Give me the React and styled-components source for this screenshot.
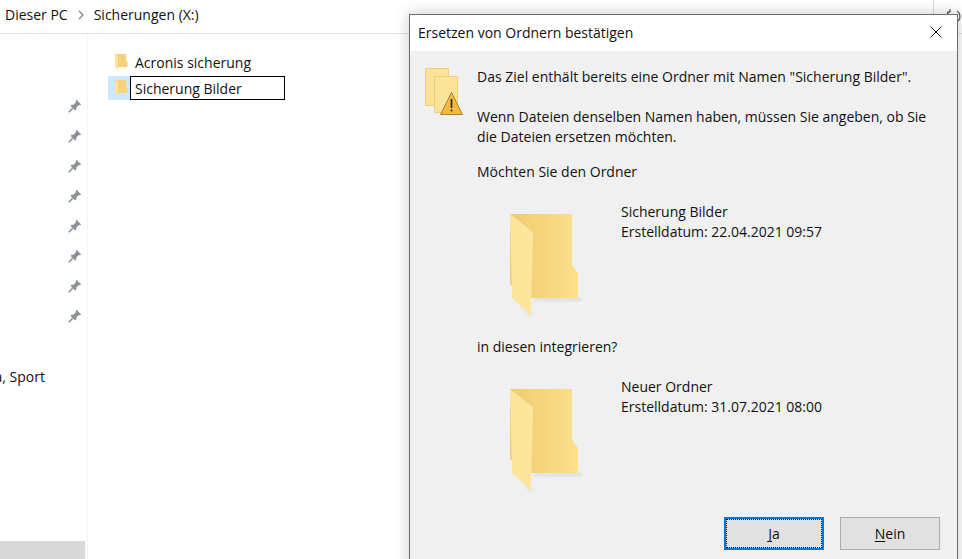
import React from 'react';
import styled, { createGlobalStyle } from 'styled-components';

const Global = createGlobalStyle`
  html, body { margin: 0; padding: 0; background: #fff; overflow: hidden; }
  body { font-family: "Open Sans", "Liberation Sans", sans-serif; color: #111; }
`;

const Screen = styled.div`
  position: relative;
  width: 962px;
  height: 559px;
  overflow: hidden;
  background: #fff;
  display: flex;
  flex-direction: column;
  font-size: 14px;
`;

const AddressBar = styled.div`
  flex: 0 0 34px;
  box-sizing: border-box;
  border-bottom: 1px solid #e3e3e3;
  display: flex;
  align-items: center;
  padding: 0 0 4px 5px;
  gap: 9px;
`;

const Chevron = styled.span`
  display: flex;
  color: #7a7a7a;
`;

const Tools = styled.div`
  margin-left: auto;
  display: flex;
  align-items: center;
  height: 33px;
  margin-bottom: -4px;
`;

const ToolSep = styled.div`
  width: 1px;
  height: 33px;
  background: #d9d9d9;
  margin: 0 10px 0 17px;
`;

const Main = styled.div`
  flex: 1;
  display: flex;
  min-height: 0;
`;

const Sidebar = styled.div`
  flex: 0 0 88px;
  box-sizing: border-box;
  border-right: 1px solid #f5f5f5;
  display: flex;
  flex-direction: column;
  padding-top: 57px;
  position: relative;
`;

const PinRow = styled.div`
  height: 30px;
  display: flex;
  align-items: center;
  justify-content: flex-end;
  padding-right: 5px;
`;

const SportRow = styled.div`
  margin-top: 35px;
  width: 45px;
  height: 20px;
  display: flex;
  justify-content: flex-end;
  align-items: center;
  overflow: hidden;
  white-space: nowrap;
`;

const ScrollThumb = styled.div`
  position: absolute;
  left: 0;
  bottom: 0;
  width: 85px;
  height: 18px;
  background: #d9d9d9;
`;

const FileList = styled.div`
  padding: 15px 0 0 20px;
  display: flex;
  flex-direction: column;
`;

const FileRow = styled.div`
  height: 26px;
  display: flex;
  align-items: center;
`;

const IconCell = styled.div`
  box-sizing: border-box;
  width: 22px;
  height: 24px;
  padding-left: 7px;
  display: flex;
  align-items: center;
  background: ${(p) => (p.$selected ? '#cce8ff' : 'transparent')};
`;

const FileName = styled.span`
  padding-left: 5px;
`;

const RenameBox = styled.div`
  box-sizing: border-box;
  width: 155px;
  height: 24px;
  border: 1px solid #000;
  padding-left: 4px;
  display: flex;
  align-items: center;
`;

const Dialog = styled.div`
  position: absolute;
  left: 409px;
  top: 14px;
  width: 549px;
  height: 560px;
  box-sizing: border-box;
  border: 1px solid #6e6e6e;
  background: #f0f0f0;
  box-shadow: 0 0 14px rgba(0, 0, 0, 0.22);
`;

const TitleBar = styled.div`
  box-sizing: border-box;
  height: 36px;
  background: #fff;
  display: flex;
  align-items: center;
  justify-content: space-between;
  padding: 0 15px 2px 8px;
`;

const Body = styled.div`
  display: flex;
  padding: 16px 0 0 14px;
`;

const WarnIcon = styled.div`
  flex: 0 0 39px;
  min-width: 0;
  height: 50px;
  margin-top: -1px;
`;

const Content = styled.div`
  padding-left: 14px;
  width: 456px;
  display: flex;
  flex-direction: column;
`;

const Para = styled.p`
  margin: 0 0 ${(p) => p.$after}px;
  line-height: 20px;
`;

const FolderInfo = styled.div`
  display: flex;
  gap: 35px;
  margin-left: 33px;
  height: ${(p) => p.$h}px;
`;

const FolderArt = styled.div`
  padding-top: 12px;
  height: 104px;
`;

const Meta = styled.div`
  line-height: 20px;
`;

const Buttons = styled.div`
  position: absolute;
  left: 314px;
  top: 502px;
  display: flex;
  gap: 16px;
`;

const Button = styled.div`
  box-sizing: border-box;
  width: 100px;
  height: 33px;
  background: #e1e1e1;
  border: ${(p) => (p.$primary ? '2px solid #0078d7' : '1px solid #adadad')};
  display: flex;
  align-items: center;
  justify-content: center;
  position: relative;

  u { text-underline-offset: 2px; }

  ${(p) => p.$primary && `
    &::after {
      content: '';
      position: absolute;
      inset: 0;
      border: 1px dotted #111;
    }
  `}
`;

function Pin() {
  return (
    <svg width="14" height="14" viewBox="0 0 14 14">
      <path d="M8.6 0.8 L13.2 5.4 L11.9 6.3 L10.9 5.9 L8.3 8.5 L8.3 10.6 L7 11.4 L2.6 7 L3.4 5.7 L5.5 5.7 L8.1 3.1 L7.7 2.1 Z" fill="#8b9196" />
      <path d="M4.6 9.4 L0.8 13.2" stroke="#8b9196" strokeWidth="1.5" />
    </svg>
  );
}

function SmallFolder() {
  return (
    <svg width="13" height="18" viewBox="0 0 13 18">
      <path d="M0 1 L11 1 L11 7 L12.5 9 L12.5 14 L3 14 L3 16 Z" fill="#f6d27a" />
      <path d="M0 1 L3 3 L3 17 L0 14 Z" fill="#fde49a" />
    </svg>
  );
}

function BigFolder({ id }) {
  return (
    <svg width="76" height="104" viewBox="0 0 76 104">
      <defs>
        <linearGradient id={id} x1="0" x2="1" y1="0" y2="0">
          <stop offset="0" stopColor="#efcb6e" />
          <stop offset="1" stopColor="#fde08c" />
        </linearGradient>
        <filter id={`${id}-blur`} x="-20%" y="-20%" width="140%" height="140%">
          <feGaussianBlur stdDeviation="1.5" />
        </filter>
      </defs>
      <path d="M24 84 L72 84 L72 87 L24 87 Z M8 90 L24 102 L20 102 Z" fill="#000" opacity="0.08" filter={`url(#${id}-blur)`} />
      <path d="M0 0 L62 0 L62 51 L68 59 L68 84 L21 84 L21 90 L0 70 Z" fill={`url(#${id})`} />
      <path d="M0 0 L23 18 L21 101 L2 84 Z" fill="#fde59c" />
    </svg>
  );
}

function Warning() {
  return (
    <svg width="40" height="50" viewBox="0 0 40 50">
      <path d="M1.5 2.5 L24.5 2.5 L24.5 39.5 L1.5 39.5 Z" fill="#fde29a" stroke="#f0cf7c" />
      <path d="M10.5 10.5 L33.5 10.5 L33.5 46.5 L10.5 46.5 Z" fill="#fde29a" stroke="#f0cf7c" />
      <path d="M27.5 26.5 L38.5 48.5 L16.5 48.5 Z" fill="#f5b93d" stroke="#a8813a" strokeLinejoin="round" />
      <path d="M27.5 33 L27.5 42" stroke="#222" strokeWidth="1.6" />
      <rect x="26.7" y="43.5" width="1.6" height="1.8" fill="#222" />
    </svg>
  );
}

export default function App() {
  return (
    <Screen>
      <Global />
      <AddressBar>
        <span>Dieser PC</span>
        <Chevron>
          <svg width="8" height="10" viewBox="0 0 8 10">
            <path d="M2 1 L6 5 L2 9" fill="none" stroke="#7a7a7a" strokeWidth="1.1" />
          </svg>
        </Chevron>
        <span>Sicherungen (X:)</span>
        <Tools>
          <svg width="8" height="5" viewBox="0 0 8 5">
            <path d="M0.5 0.5 L4 4 L7.5 0.5" fill="none" stroke="#666" />
          </svg>
          <ToolSep />
          <svg width="18" height="18" viewBox="0 0 18 18">
            <path d="M13 3 A6.5 6.5 0 1 1 6 3 M6 1 L6 4 L3 4" fill="none" stroke="#555" strokeWidth="1.2" />
          </svg>
        </Tools>
      </AddressBar>
      <Main>
        <Sidebar>
          {[...Array(8).keys()].map((i) => (
            <PinRow key={i}>
              <Pin />
            </PinRow>
          ))}
          <SportRow>a, Sport</SportRow>
          <ScrollThumb />
        </Sidebar>
        <FileList>
          <FileRow>
            <IconCell><SmallFolder /></IconCell>
            <FileName>Acronis sicherung</FileName>
          </FileRow>
          <FileRow>
            <IconCell $selected><SmallFolder /></IconCell>
            <RenameBox>Sicherung Bilder</RenameBox>
          </FileRow>
        </FileList>
      </Main>
      <Dialog>
        <TitleBar>
          <span>Ersetzen von Ordnern bestätigen</span>
          <svg width="12" height="12" viewBox="0 0 12 12">
            <path d="M0.5 0.5 L11.5 11.5 M11.5 0.5 L0.5 11.5" stroke="#111" strokeWidth="1" />
          </svg>
        </TitleBar>
        <Body>
          <WarnIcon><Warning /></WarnIcon>
          <Content>
            <Para $after={20}>Das Ziel enthält bereits eine Ordner mit Namen "Sicherung Bilder".</Para>
            <Para $after={15}>Wenn Dateien denselben Namen haben, müssen Sie angeben, ob Sie die Dateien ersetzen möchten.</Para>
            <Para $after={20}>Möchten Sie den Ordner</Para>
            <FolderInfo $h={135}>
              <FolderArt><BigFolder id="f1" /></FolderArt>
              <Meta>Sicherung Bilder<br />Erstelldatum: 22.04.2021 09:57</Meta>
            </FolderInfo>
            <Para $after={20}>in diesen integrieren?</Para>
            <FolderInfo $h={110}>
              <FolderArt><BigFolder id="f2" /></FolderArt>
              <Meta>Neuer Ordner<br />Erstelldatum: 31.07.2021 08:00</Meta>
            </FolderInfo>
          </Content>
        </Body>
        <Buttons>
          <Button $primary><span><u>J</u>a</span></Button>
          <Button><span><u>N</u>ein</span></Button>
        </Buttons>
      </Dialog>
    </Screen>
  );
}
